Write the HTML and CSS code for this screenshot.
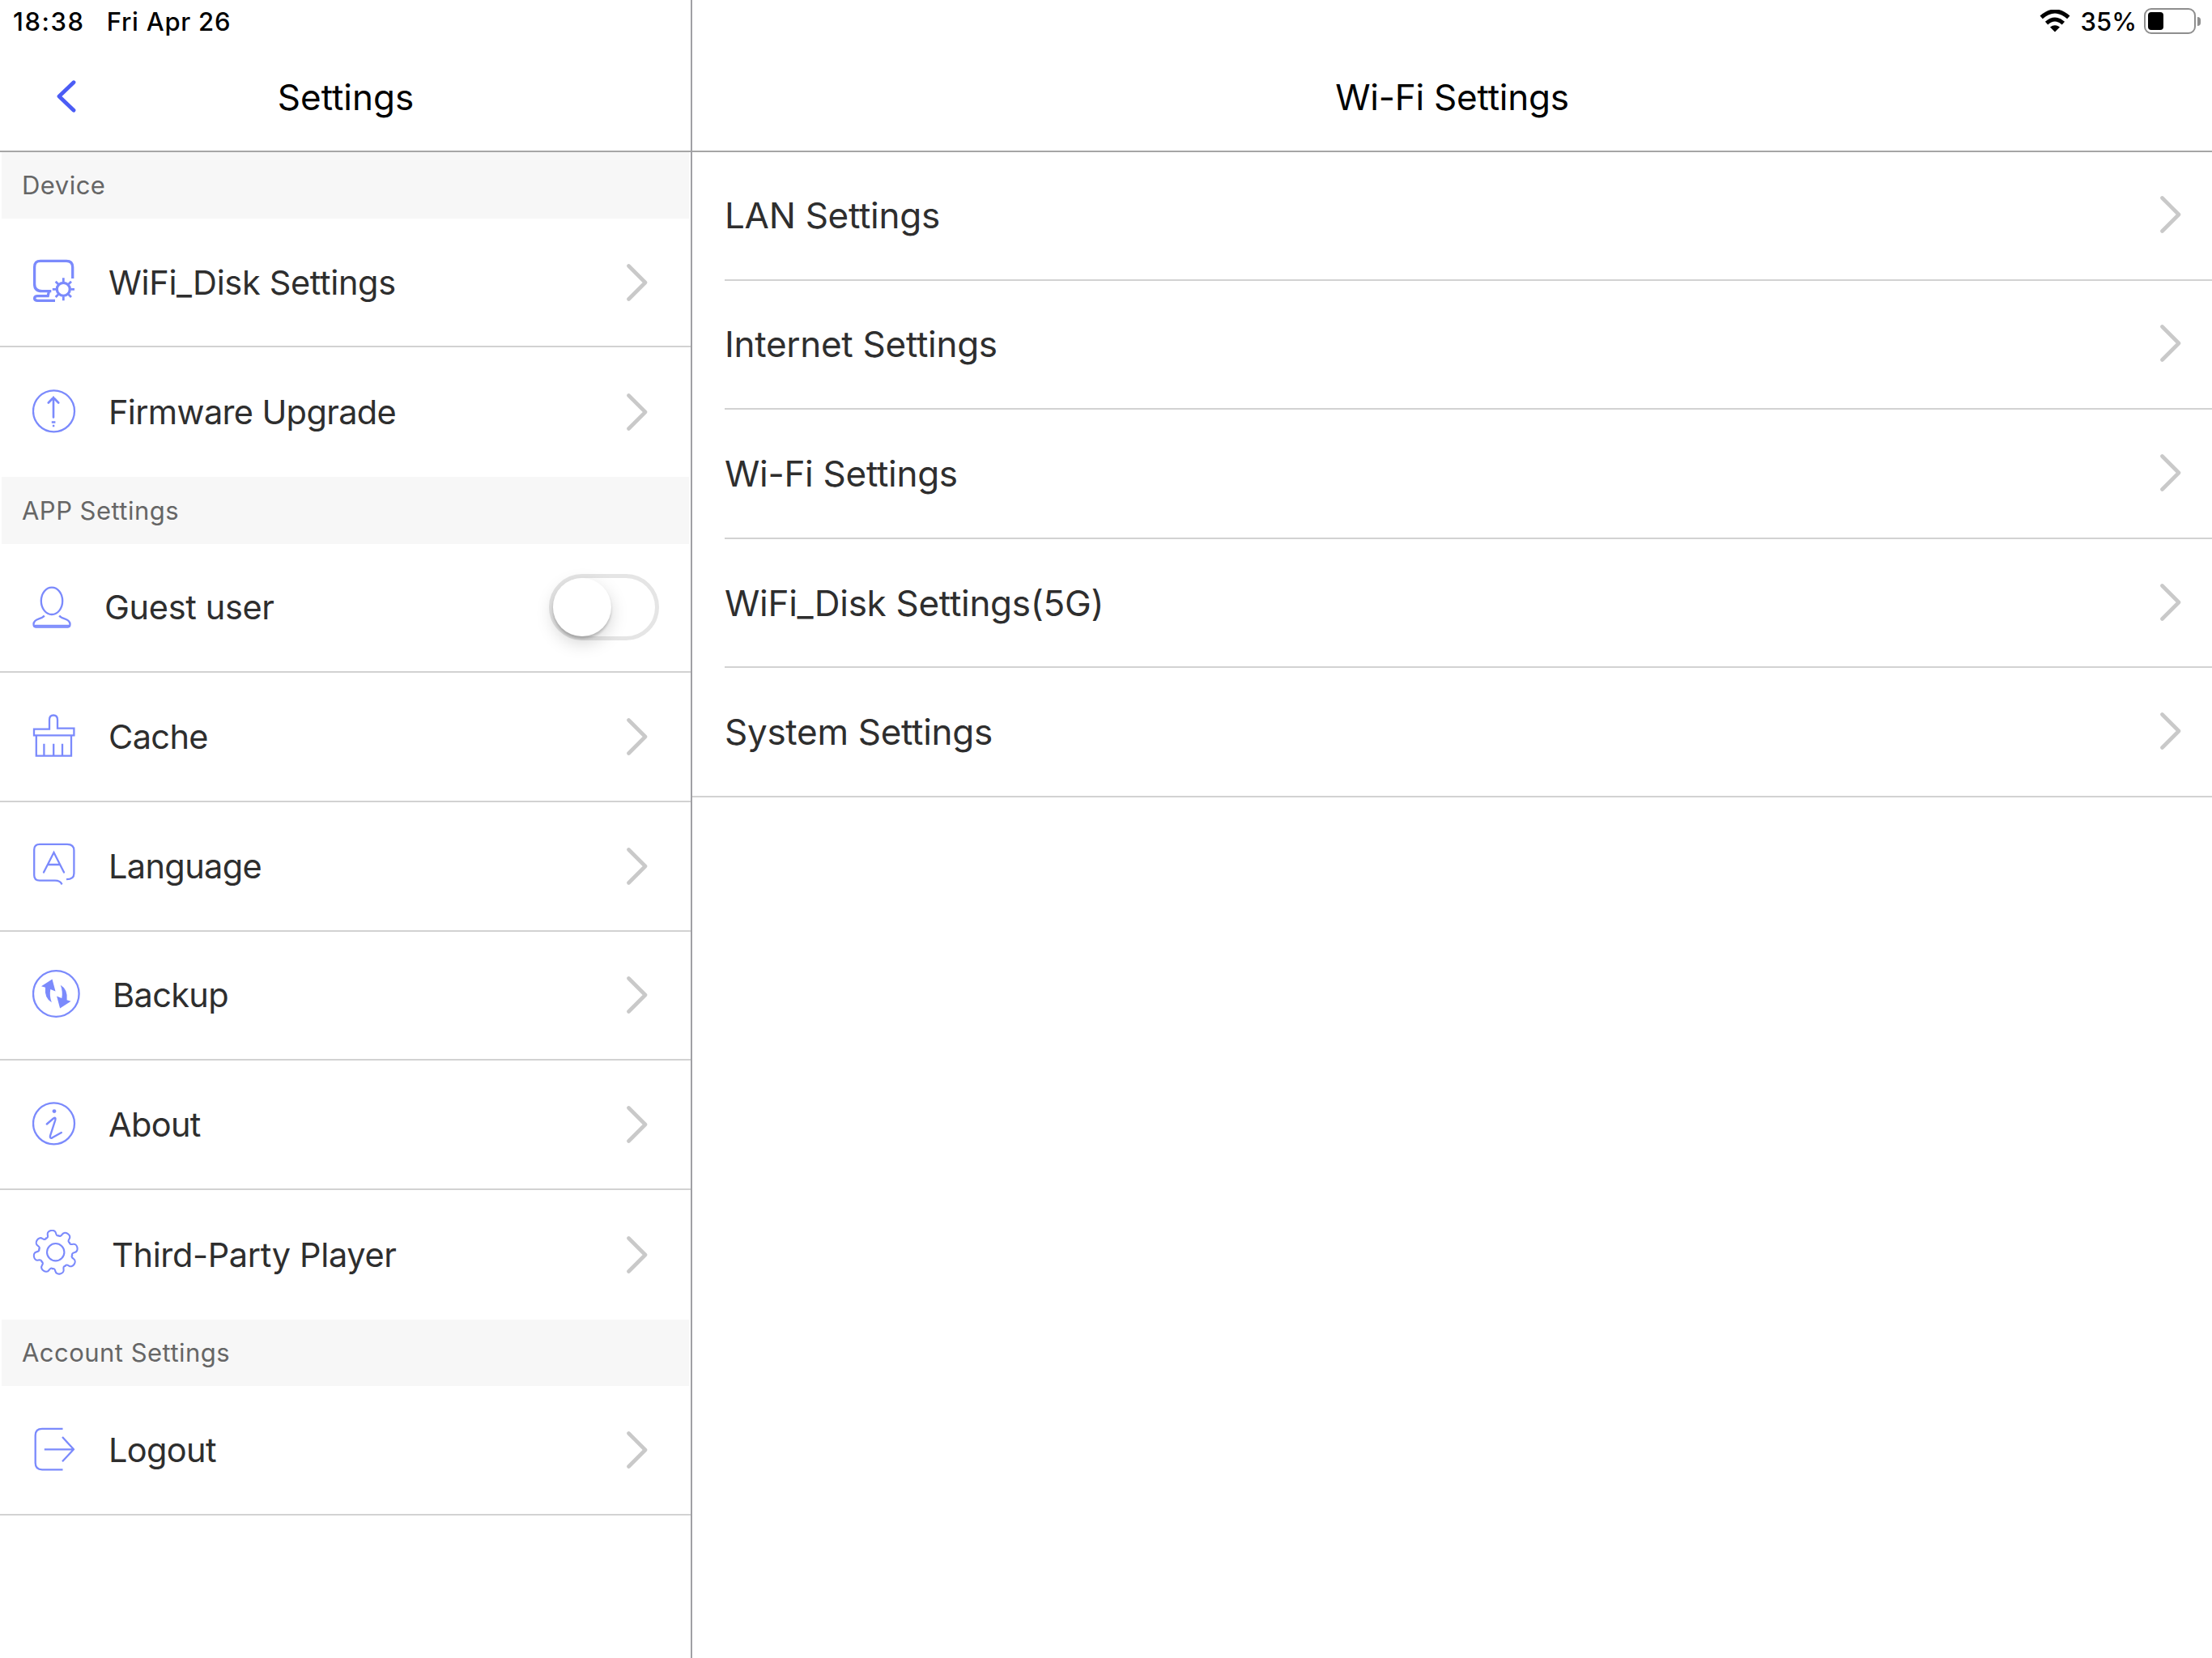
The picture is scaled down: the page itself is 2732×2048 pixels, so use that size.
FILE: index.html
```html
<!DOCTYPE html>
<html lang="en">
<head>
    <meta charset="UTF-8">
    <meta name="viewport" content="width=device-width, initial-scale=1.0">
    <title>Settings</title>
    <link rel="stylesheet" href="styles.css">
</head>
<body>
    <svg class="defs" width="0" height="0">
        <symbol id="chevron" viewBox="0 0 26 46">
            <path d="M2.5 2.5L23 23L2.5 43.5" fill="none" stroke="#c9c9c9" stroke-width="4.6" stroke-linecap="round" stroke-linejoin="round"/>
        </symbol>
    </svg>

    <div class="app">
        <div class="sidebar">
            <div class="header">
                <div class="status">
                    <span class="time">18:38</span>
                    <span class="date">Fri Apr 26</span>
                </div>
                <div class="nav">
                    <svg class="back" viewBox="0 0 24 40"><path d="M21 2.7L3 20L21 37.3"/></svg>
                    <span class="title">Settings</span>
                </div>
            </div>

            <div class="section section-first">Device</div>
            <div class="row">
                <svg class="icon" width="54" height="54" viewBox="0 0 54 54">
                    <g stroke-width="3.3">
                        <path d="M49.7 24V10Q49.7 2.3 42 2.3H10Q2.6 2.3 2.6 10V31Q2.6 39.7 12 39.7H23.3"/>
                        <path d="M20.3 40.5L19.2 45.7H6.5Q2.6 45.7 2.6 48.5Q2.6 51.3 6.5 51.3H28"/>
                        <circle cx="38.3" cy="37.3" r="8"/>
                    </g>
                    <path stroke-width="2.8" d="M38.3 23.3V28M38.3 46.5V51.3M24.8 37.3H29M47.5 37.3H52M28.7 27.7L32 31M48 27.7L44.7 31M28.7 47L32 43.7M48 47L44.7 43.7"/>
                </svg>
                <span class="label">WiFi_Disk Settings</span>
                <svg class="chevron"><use href="#chevron"/></svg>
            </div>
            <div class="row no-line">
                <svg class="icon" width="54" height="54" viewBox="0 0 54 54">
                    <circle cx="26.5" cy="26.8" r="25.5"/>
                    <path stroke-width="2.6" stroke-linecap="round" d="M26 10V34.5M19.8 16.5L26 10L32.2 16.5"/>
                    <path stroke-width="2.4" d="M23.8 40.5H28.4M24.9 45H27.3"/>
                </svg>
                <span class="label tight">Firmware Upgrade</span>
                <svg class="chevron"><use href="#chevron"/></svg>
            </div>

            <div class="section">APP Settings</div>
            <div class="row">
                <svg class="icon" width="49" height="56" viewBox="0 -3 49 56">
                    <ellipse cx="24" cy="18.3" rx="13.2" ry="16.7"/>
                    <path d="M14.8 36.5Q13 39 8 40.3Q1.5 42.5 1.5 47Q1.5 50.5 4 50.5H44Q46.5 50.5 46.5 47Q46.5 42.5 40 40.3Q35 39 33.2 36.5"/>
                    <path stroke-width="1.8" d="M3 48.7H45"/>
                </svg>
                <span class="label">Guest user</span>
                <span class="toggle"><span class="thumb"></span></span>
            </div>
            <div class="row">
                <svg class="icon" width="54" height="54" viewBox="0 0 54 54">
                    <path d="M2 18.7H21V7Q21 1.5 26 1.5Q31 1.5 31 7V17.6H51.4V26.3H2Z"/>
                    <path d="M4.8 26.3V51.7H48V26.3M14.4 36.7V51M26.2 36.7V51M37 36.7V51"/>
                </svg>
                <span class="label tight">Cache</span>
                <svg class="chevron"><use href="#chevron"/></svg>
            </div>
            <div class="row">
                <svg class="icon" width="54" height="54" viewBox="0 0 54 54">
                    <path d="M36.5 51.5Q34.5 46.7 28 46.7H9Q2.2 46.7 2.2 40V8.5Q2.2 1.8 9 1.8H43Q51.4 1.8 51.4 9.5V38Q51.4 45.2 42 45.2"/>
                    <path stroke-linecap="round" d="M14 36.5L26.5 12L39 36.5M19 27H34"/>
                </svg>
                <span class="label tight">Language</span>
                <svg class="chevron"><use href="#chevron"/></svg>
            </div>
            <div class="row">
                <svg class="icon" width="59" height="59" viewBox="0 0 59 59">
                    <circle cx="29.3" cy="29.5" r="28.3"/>
                    <g id="arrow" class="solid">
                        <path d="M24.5 11.5L28.5 26.5L22.3 24Q20.8 32 23.8 40.3Q14.6 35 16 21.8L11 20.2Z"/>
                    </g>
                    <use href="#arrow" transform="rotate(180 29.3 29.5)"/>
                </svg>
                <span class="label tight">Backup</span>
                <svg class="chevron"><use href="#chevron"/></svg>
            </div>
            <div class="row">
                <svg class="icon" width="54" height="54" viewBox="0 0 54 54">
                    <circle cx="26.5" cy="26.8" r="25.5"/>
                    <circle class="solid" cx="27" cy="11.6" r="2.4"/>
                    <path stroke-width="2.4" stroke-linecap="round" stroke-linejoin="round" d="M17.8 27.5L26 20.5Q29.3 18.3 28.3 22.5L22 42Q21.3 45.8 24.6 44.3L35.8 38"/>
                </svg>
                <span class="label tight">About</span>
                <svg class="chevron"><use href="#chevron"/></svg>
            </div>
            <div class="row no-line">
                <svg class="icon" width="58" height="58" viewBox="0 0 58 58">
                    <g transform="translate(28.7 27.7)" stroke-width="2.1" stroke-linecap="round">
                        <circle r="10.7"/>
                        <path id="tooth" transform="rotate(-12)" d="M-8-19.2Q-5.3-18.8-5.2-23C-5.2-28.8 5.2-28.8 5.2-23Q5.3-18.8 8-19.2"/>
                        <use href="#tooth" transform="rotate(45)"/>
                        <use href="#tooth" transform="rotate(90)"/>
                        <use href="#tooth" transform="rotate(135)"/>
                        <use href="#tooth" transform="rotate(180)"/>
                        <use href="#tooth" transform="rotate(225)"/>
                        <use href="#tooth" transform="rotate(270)"/>
                        <use href="#tooth" transform="rotate(315)"/>
                    </g>
                </svg>
                <span class="label">Third-Party Player</span>
                <svg class="chevron"><use href="#chevron"/></svg>
            </div>

            <div class="section">Account Settings</div>
            <div class="row">
                <svg class="icon" width="54" height="54" viewBox="0 0 54 54">
                    <path d="M37.5 1.8H12Q3.7 1.8 3.7 10V44Q3.7 52.3 12 52.3H37.5"/>
                    <path stroke-linejoin="round" d="M14.8 27.3H51M37 12L51 27.3L37 42.2"/>
                </svg>
                <span class="label tight">Logout</span>
                <svg class="chevron"><use href="#chevron"/></svg>
            </div>
        </div>

        <div class="content">
            <div class="header">
                <div class="status status-right">
                    <svg class="wifi" viewBox="0 0 38 28">
                        <path d="M2.2 9.4Q19-5.4 35.8 9.4" stroke-width="5"/>
                        <path d="M8.6 16.6Q19 7.4 29.4 16.6" stroke-width="5"/>
                        <path class="wifi-dot" d="M13 21.5Q19 16.8 25 21.5L19 27.5Z"/>
                    </svg>
                    <span>35%</span>
                    <span class="battery"><span class="battery-level"></span></span>
                    <span class="battery-tip"></span>
                </div>
                <div class="nav">
                    <span class="title">Wi-Fi Settings</span>
                </div>
            </div>

            <div class="list">
                <div class="item">LAN Settings<svg class="chevron"><use href="#chevron"/></svg></div>
                <div class="item">Internet Settings<svg class="chevron"><use href="#chevron"/></svg></div>
                <div class="item">Wi-Fi Settings<svg class="chevron"><use href="#chevron"/></svg></div>
                <div class="item">WiFi_Disk Settings(5G)<svg class="chevron"><use href="#chevron"/></svg></div>
                <div class="item item-last">System Settings<svg class="chevron"><use href="#chevron"/></svg></div>
            </div>
        </div>
    </div>
</body>
</html>
```

FILE: styles.css
```css
* {
    box-sizing: border-box;
}
body {
    margin: 0;
    background-color: #fff;
    color: #2e2e2e;
    font-family: Inter, "Noto Sans", sans-serif;
}
.defs {
    display: none;
}
.app {
    display: flex;
    height: 100vh;
    overflow: hidden;
}
.sidebar {
    width: 855px;
    flex: none;
    border-right: 2px solid #a0a0a4;
}
.content {
    flex: 1;
}

/* status bar and title */
.header {
    height: 188px;
    border-bottom: 2px solid #a6a6a6;
    color: #000;
}
.status {
    display: flex;
    align-items: center;
    height: 52px;
    padding-left: 16px;
    font-size: 31px;
    font-weight: 500;
}
.time {
    letter-spacing: 1.6px;
    margin-right: 27px;
}
.date {
    letter-spacing: 0.75px;
}
.status-right {
    justify-content: flex-end;
    padding-right: 14px;
}
.wifi {
    width: 38px;
    height: 28px;
    margin-right: 13px;
    fill: none;
    stroke: #000;
}
.wifi .wifi-dot {
    fill: #000;
    stroke: none;
}
.battery {
    width: 64px;
    height: 32px;
    margin-left: 9px;
    padding: 3px;
    border: 2.5px solid #8e8e8e;
    border-radius: 9px;
}
.battery-level {
    display: block;
    width: 19px;
    height: 22px;
    border-radius: 4px;
    background-color: #000;
}
.battery-tip {
    width: 4px;
    height: 11px;
    margin-left: 2px;
    border-radius: 0 4px 4px 0;
    background-color: #8e8e8e;
}
.nav {
    display: grid;
    grid-template-columns: 70px 1fr 70px;
    align-items: center;
    height: 134px;
    padding-top: 2px;
}
.back {
    grid-area: 1 / 2;
    width: 24px;
    height: 40px;
    margin-bottom: 2px;
    fill: none;
    stroke: #4b5cf5;
    stroke-width: 4.8;
    stroke-linecap: round;
    stroke-linejoin: round;
}
.title {
    grid-area: 1 / 2;
    padding-left: 1px;
    font-size: 44px;
    text-align: center;
}
.content .title {
    padding-left: 0;
    letter-spacing: -0.22px;
}

/* left menu */
.section {
    display: flex;
    align-items: center;
    height: 82.7px;
    margin: 0 2px;
    padding-left: 25px;
    background-color: #f7f7f7;
    color: #666;
    font-size: 31px;
    letter-spacing: 0.47px;
}
.section-first {
    height: 81.7px;
}
.row {
    display: flex;
    align-items: center;
    height: 159.65px;
    padding: 0 39px 0 40px;
    border-bottom: 2px solid #d2d2d2;
    font-size: 41.5px;
}
.no-line {
    border-bottom: none;
}
.icon {
    flex: none;
    margin-bottom: 3px;
    margin-right: 40px;
    fill: none;
    stroke: #7b8afc;
    stroke-width: 2.3;
}
.icon .solid {
    fill: #7b8afc;
    stroke: none;
}
.label {
    letter-spacing: -0.35px;
}
.tight {
    letter-spacing: -0.65px;
}
.chevron {
    flex: none;
    width: 26px;
    height: 46px;
    margin-left: auto;
    margin-right: 14px;
}
.toggle {
    width: 136px;
    height: 82px;
    margin-left: auto;
    border: 5px solid #e5e5e5;
    border-radius: 41px;
}
.thumb {
    display: block;
    width: 72px;
    height: 72px;
    border-radius: 50%;
    background-color: #fff;
    box-shadow: 0 8px 21px rgba(0, 0, 0, 0.17), 0 3px 3px rgba(0, 0, 0, 0.18);
}

/* right list */
.list {
    margin-top: -1px;
}
.item {
    display: flex;
    align-items: center;
    height: 159.6px;
    margin-left: 40px;
    padding-right: 24px;
    border-bottom: 2px solid #d2d2d2;
    font-size: 44px;
    letter-spacing: -0.28px;
}
.item .chevron {
    margin-bottom: 2px;
}
.item-last {
    margin-left: 0;
    padding-left: 40px;
}
```
